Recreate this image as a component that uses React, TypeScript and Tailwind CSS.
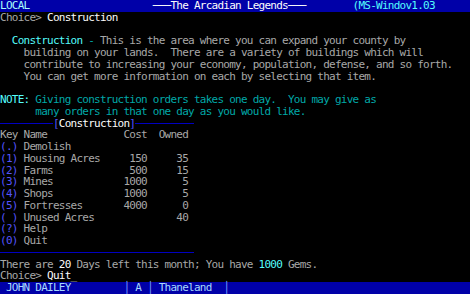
import React from "react";

// DOS text-mode screen: 80 cols x 25 rows at 5.875 x 11.76 px per cell

const GREY = "text-[#a8a8a8]";
const WHITE = "text-[#fcfcfc]";
const CYAN = "text-[#00a8a8]";
const BCYAN = "text-[#54fcfc]";
const BLUE = "text-[#5454fc]";

function Rule({ cols }: { cols: number }) {
  return (
    <span
      className="inline-block h-[6px] align-top border-b border-[#0000c0]"
      style={{ width: cols * 5.875 }}
    />
  );
}

function Row({
  children,
  className = "",
}: {
  children?: React.ReactNode;
  className?: string;
}) {
  return (
    <div className={`h-[11.76px] whitespace-pre ${className}`}>{children}</div>
  );
}

interface Building {
  key: string;
  name: string;
  cost?: number;
  owned?: number;
}

const buildings: Building[] = [
  { key: ".", name: "Demolish" },
  { key: "1", name: "Housing Acres", cost: 150, owned: 35 },
  { key: "2", name: "Farms", cost: 500, owned: 15 },
  { key: "3", name: "Mines", cost: 1000, owned: 5 },
  { key: "4", name: "Shops", cost: 1000, owned: 5 },
  { key: "5", name: "Fortresses", cost: 4000, owned: 0 },
  { key: " ", name: "Unused Acres", owned: 40 },
  { key: "?", name: "Help" },
  { key: "0", name: "Quit" },
];

function BuildingRow({ b }: { b: Building }) {
  const name = b.name.padEnd(17, " ");
  const cost = b.cost !== undefined ? String(b.cost).padStart(4, " ") : "    ";
  const owned = b.owned !== undefined ? String(b.owned).padStart(7, " ") : "";
  return (
    <Row>
      <span className={BLUE}>({b.key})</span>
      <span className={GREY}>
        {" " + name + cost + owned}
      </span>
    </Row>
  );
}

export default function App() {
  return (
    <div
      className="w-[470px] h-[294px] overflow-hidden bg-black text-[11px] leading-[11.76px] tracking-[-0.747px]"
      style={{ fontFamily: '"DejaVu Sans Mono", "Liberation Mono", monospace' }}
    >
      {/* top status bar */}
      <Row className="bg-[#0000a8]">
        <span className="text-[#a8fcfc]">LOCAL</span>
        {" ".repeat(21)}
        <span className={WHITE}>───The Arcadian Legends───</span>
        {" ".repeat(8)}
        <span className={BCYAN}>(MS-Windov1.03</span>
      </Row>

      <Row>
        <span className={GREY}>Choice&gt; </span>
        <span className={WHITE}>Construction</span>
      </Row>
      <Row />
      <Row>
        {"  "}
        <span className={BCYAN}>Construction</span>
        <span className={CYAN}> - </span>
        <span className={GREY}>
          This is the area where you can expand your county by
        </span>
      </Row>
      <Row className={GREY}>
        {"    building on your lands.  There are a variety of buildings which will"}
      </Row>
      <Row className={GREY}>
        {"    contribute to increasing your economy, population, defense, and so forth."}
      </Row>
      <Row className={GREY}>
        {"    You can get more information on each by selecting that item."}
      </Row>
      <Row />
      <Row>
        <span className={BCYAN}>NOTE:</span>
        <span className={CYAN}>
          {" Giving construction orders takes one day.  You may give as"}
        </span>
      </Row>
      <Row className={CYAN}>
        {"      many orders in that one day as you would like."}
      </Row>

      {/* menu header with rule */}
      <Row>
        <Rule cols={9} />
        <span className={BLUE}>[</span>
        <span className={WHITE}>Construction</span>
        <span className={BLUE}>]</span>
        <Rule cols={10} />
      </Row>
      <Row className={GREY}>{"Key Name             Cost  Owned"}</Row>
      {buildings.map((b) => (
        <BuildingRow key={b.key + b.name} b={b} />
      ))}
      <Row>
        <Rule cols={33} />
      </Row>

      <Row className={GREY}>
        {"There are "}
        <span className={WHITE}>20</span>
        {" Days left this month; You have "}
        <span className={BCYAN}>1000</span>
        {" Gems."}
      </Row>
      <Row>
        <span className={GREY}>Choice&gt; </span>
        <span className={WHITE}>Quit</span>
        <span className={GREY}>_</span>
      </Row>

      {/* bottom status bar */}
      <Row className="bg-[#0000a8] text-[#a8d8fc]">
        {" JOHN DAILEY         "}
        <span className="text-[#7c9cfc]">│</span>
        {" A "}
        <span className="text-[#7c9cfc]">│</span>
        {" Thaneland  "}
        <span className="text-[#7c9cfc]">│</span>
      </Row>
    </div>
  );
}
